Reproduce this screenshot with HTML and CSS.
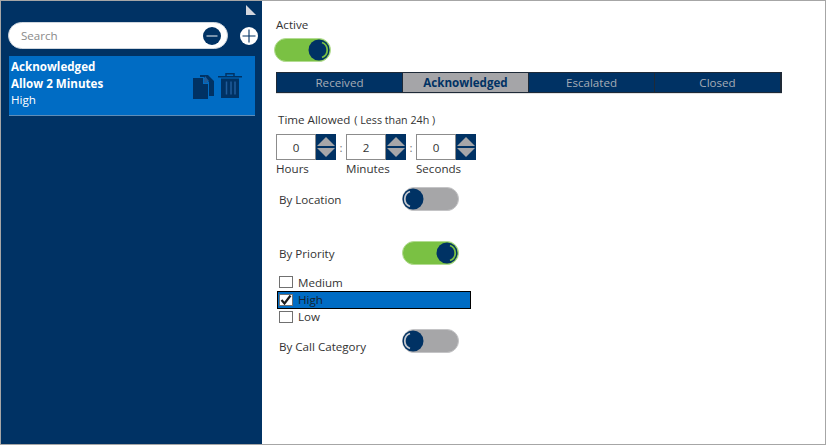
FILE: index.html
```html
<!DOCTYPE html>
<html lang="en">
<head>
<meta charset="utf-8">
<title>Escalation rules</title>
<link rel="stylesheet" href="styles.css">
</head>
<body>
<div class="window">
  <aside class="sidebar">
    <div class="corner-row"><span class="corner"></span></div>
    <div class="search-row">
      <div class="search">
        <span class="search-text">Search</span>
        <svg class="search-minus" viewBox="0 0 18 18"><circle cx="9" cy="9" r="9" fill="#003264"/><path d="M3.5 9h11" stroke="#c9d3de" stroke-width="1.2"/></svg>
      </div>
      <svg class="add" viewBox="0 0 18 18"><circle cx="9" cy="9" r="9" fill="#fff"/><path d="M9 2.5v13M2.5 9h13" stroke="#003264" stroke-width="1.1"/></svg>
    </div>
    <div class="card">
      <div class="card-text">
        <div class="bold">Acknowledged</div>
        <div class="bold">Allow 2 Minutes</div>
        <div>High</div>
      </div>
      <div class="card-icons">
        <svg class="copy" viewBox="0 0 21 24"><path d="M7 0h8l6 6v15h-5V7l-5-5H7z" fill="#003264"/><path d="M12 1l4 5h-4z" fill="#1f5c9b"/><path d="M0 3h10v6h5v15H0z" fill="#003264"/><path d="M11 3l4 5h-4z" fill="#1f5c9b"/></svg>
        <svg class="trash" viewBox="0 0 24 25"><path d="M8 3V.8h8V3" fill="none" stroke="#003264" stroke-width="1.5"/><path d="M0 3h24v1.5H0z" fill="#003264"/><path d="M3 5.500h18V25H3z" fill="#003264"/><path d="M8.500 8.500v13M13 8.500v13M17 8.500v13" stroke="#1f5c9b" stroke-width="1.500"/></svg>
      </div>
    </div>
  </aside>
  <main class="content">
    <div class="active-label">Active</div>
    <div class="toggle on wide"><svg class="knob" viewBox="0 0 22 22"><circle cx="11" cy="11" r="10.500" fill="#003264"/><path d="M14 3.500a8 8 0 0 1 0 15" fill="none" stroke="#7ac143" stroke-width="1.800"/></svg></div>
    <div class="tabs">
      <div class="tab">Received</div>
      <div class="tab selected">Acknowledged</div>
      <div class="tab">Escalated</div>
      <div class="tab">Closed</div>
    </div>
    <div class="time-title">Time Allowed<span class="time-note">( Less than 24h )</span></div>
    <div class="time-row">
      <div class="time-col">
        <div class="spinner"><div class="value">0</div><div class="stepper"><span class="up"></span><span class="down"></span></div></div>
        <div class="unit">Hours</div>
      </div>
      <div class="colon">:</div>
      <div class="time-col">
        <div class="spinner"><div class="value">2</div><div class="stepper"><span class="up"></span><span class="down"></span></div></div>
        <div class="unit">Minutes</div>
      </div>
      <div class="colon">:</div>
      <div class="time-col">
        <div class="spinner"><div class="value">0</div><div class="stepper"><span class="up"></span><span class="down"></span></div></div>
        <div class="unit">Seconds</div>
      </div>
    </div>
    <div class="option location">
      <div class="option-label">By Location</div>
      <div class="toggle off"><svg class="knob" viewBox="0 0 22 22"><circle cx="11" cy="11" r="10.500" fill="#003264"/><path d="M8 3.500a8 8 0 0 0 0 15" fill="none" stroke="#c4c8cf" stroke-width="1.800"/></svg></div>
    </div>
    <div class="option priority">
      <div class="option-label">By Priority</div>
      <div class="toggle on"><svg class="knob" viewBox="0 0 22 22"><circle cx="11" cy="11" r="10.500" fill="#003264"/><path d="M14 3.500a8 8 0 0 1 0 15" fill="none" stroke="#7ac143" stroke-width="1.800"/></svg></div>
    </div>
    <div class="checks">
      <div class="check-row"><span class="box"></span>Medium</div>
      <div class="check-row chosen"><span class="box"><svg viewBox="0 0 12 10"><path d="M1.500 5l3 3.500 6-8" fill="none" stroke="#1c1c1c" stroke-width="2.200"/></svg></span>High</div>
      <div class="check-row"><span class="box"></span>Low</div>
    </div>
    <div class="option category">
      <div class="option-label">By Call Category</div>
      <div class="toggle off"><svg class="knob" viewBox="0 0 22 22"><circle cx="11" cy="11" r="10.500" fill="#003264"/><path d="M8 3.500a8 8 0 0 0 0 15" fill="none" stroke="#c4c8cf" stroke-width="1.800"/></svg></div>
    </div>
  </main>
</div>
</body>
</html>
```
FILE: styles.css
```css
* { box-sizing: border-box; }
html, body { margin: 0; padding: 0; background: #fff; }
body { font-family: "Open Sans", "Noto Sans", sans-serif; font-size: 11.6px; color: #333; }
.window { width: 826px; height: 445px; border: 1px solid #a6a6a6; display: flex; overflow: hidden; }
.sidebar { width: 261px; background: #003264; padding: 0 3px 0 7px; flex: none; }
.corner-row { display: flex; justify-content: flex-end; height: 21px; padding: 4px 3px 0 0; }
.corner { width: 10px; height: 10px; background: #d3d6de; clip-path: polygon(0 0, 100% 100%, 0 100%); }
.search-row { display: flex; align-items: center; gap: 12px; }
.search { width: 220px; height: 27px; flex: none; background: #fff; border-radius: 14px; border: 1px solid #cfd6de; display: flex; align-items: center; justify-content: space-between; padding: 0 6px 0 12px; }
.search-text { color: #8a8a8a; }
.search-minus { width: 18px; height: 18px; }
.add { width: 18px; height: 18px; flex: none; }
.card { margin: 7px 0 0 1px; width: 246px; height: 60px; background: #006cc4; border-bottom: 1px solid #5e8db8; display: flex; justify-content: space-between; padding: 3px 13px 0 2px; color: #fff; }
.card-text { line-height: 16.5px; }
.bold { font-weight: 700; }
.card-icons { display: flex; align-items: flex-start; gap: 4px; margin-top: 14px; }
.copy { width: 21px; height: 24px; margin-top: 2px; }
.trash { width: 24px; height: 25px; }
.content { flex: 1; padding: 16px 0 0 14px; color: #333; }
.active-label { line-height: 16px; height: 21px; }
.toggle { width: 57px; height: 24px; border-radius: 12px; display: flex; align-items: center; flex: none; }
.toggle.on { background: #7ac143; border: 1px solid #b3dc92; justify-content: flex-end; }
.toggle.off { background: #a6a6a8; border: 1px solid #c4c4c6; justify-content: flex-start; }
.toggle.wide { margin-left: -2px; }
.knob { width: 22px; height: 22px; display: block; }
.toggle.on .knob { margin-right: 0; }
.toggle.off .knob { margin-left: -1px; }
.tabs { display: flex; width: 506px; height: 21px; margin-top: 10px; background: #003264; border: 1px solid #1e2a38; border-right-width: 2px; box-shadow: 0 1px 0 #e2e2e2; }
.tab { flex: 1; display: flex; align-items: center; justify-content: center; color: #a5acb6; border-right: 1px solid #1e2a38; }
.tab:last-child { border-right: none; }
.tab.selected { background: #a5a5a8; color: #003264; font-weight: 700; }
.time-title { margin: 18px 0 0 2px; height: 17px; line-height: 17px; }
.time-note { font-size: 10.7px; margin-left: 4px; }
.time-row { display: flex; margin-top: 6px; }
.time-col { width: 60px; }
.spinner { display: flex; height: 26px; }
.value { width: 40px; border: 1px solid #8c8c8c; display: flex; align-items: center; justify-content: center; }
.stepper { width: 20px; background: #003264; display: flex; flex-direction: column; align-items: center; justify-content: center; gap: 2px; }
.up { width: 0; height: 0; border-left: 9px solid transparent; border-right: 9px solid transparent; border-bottom: 9px solid #a6a6a8; }
.down { width: 0; height: 0; border-left: 9px solid transparent; border-right: 9px solid transparent; border-top: 9px solid #a6a6a8; }
.unit { line-height: 16px; margin-top: 1px; }
.colon { width: 10px; height: 26px; display: flex; align-items: center; justify-content: center; color: #777; }
.option { display: flex; align-items: center; }
.option-label { width: 123px; margin-left: 3px; }
.location { margin-top: 10px; }
.priority { margin-top: 30px; }
.category { margin-top: 4px; align-items: flex-start; }
.category .option-label { margin-top: 10px; }
.checks { margin: 9px 0 0 1px; width: 194px; }
.check-row { display: flex; align-items: center; height: 16.5px; padding-left: 2px; gap: 5px; }
.check-row.chosen { height: 18px; background: #006cc4; border: 1px solid #000; padding-left: 1px; color: #14202c; }
.box { width: 14px; height: 12px; background: #fff; border: 1px solid #707070; display: block; flex: none; }
.box svg { display: block; width: 12px; height: 10px; }
```
